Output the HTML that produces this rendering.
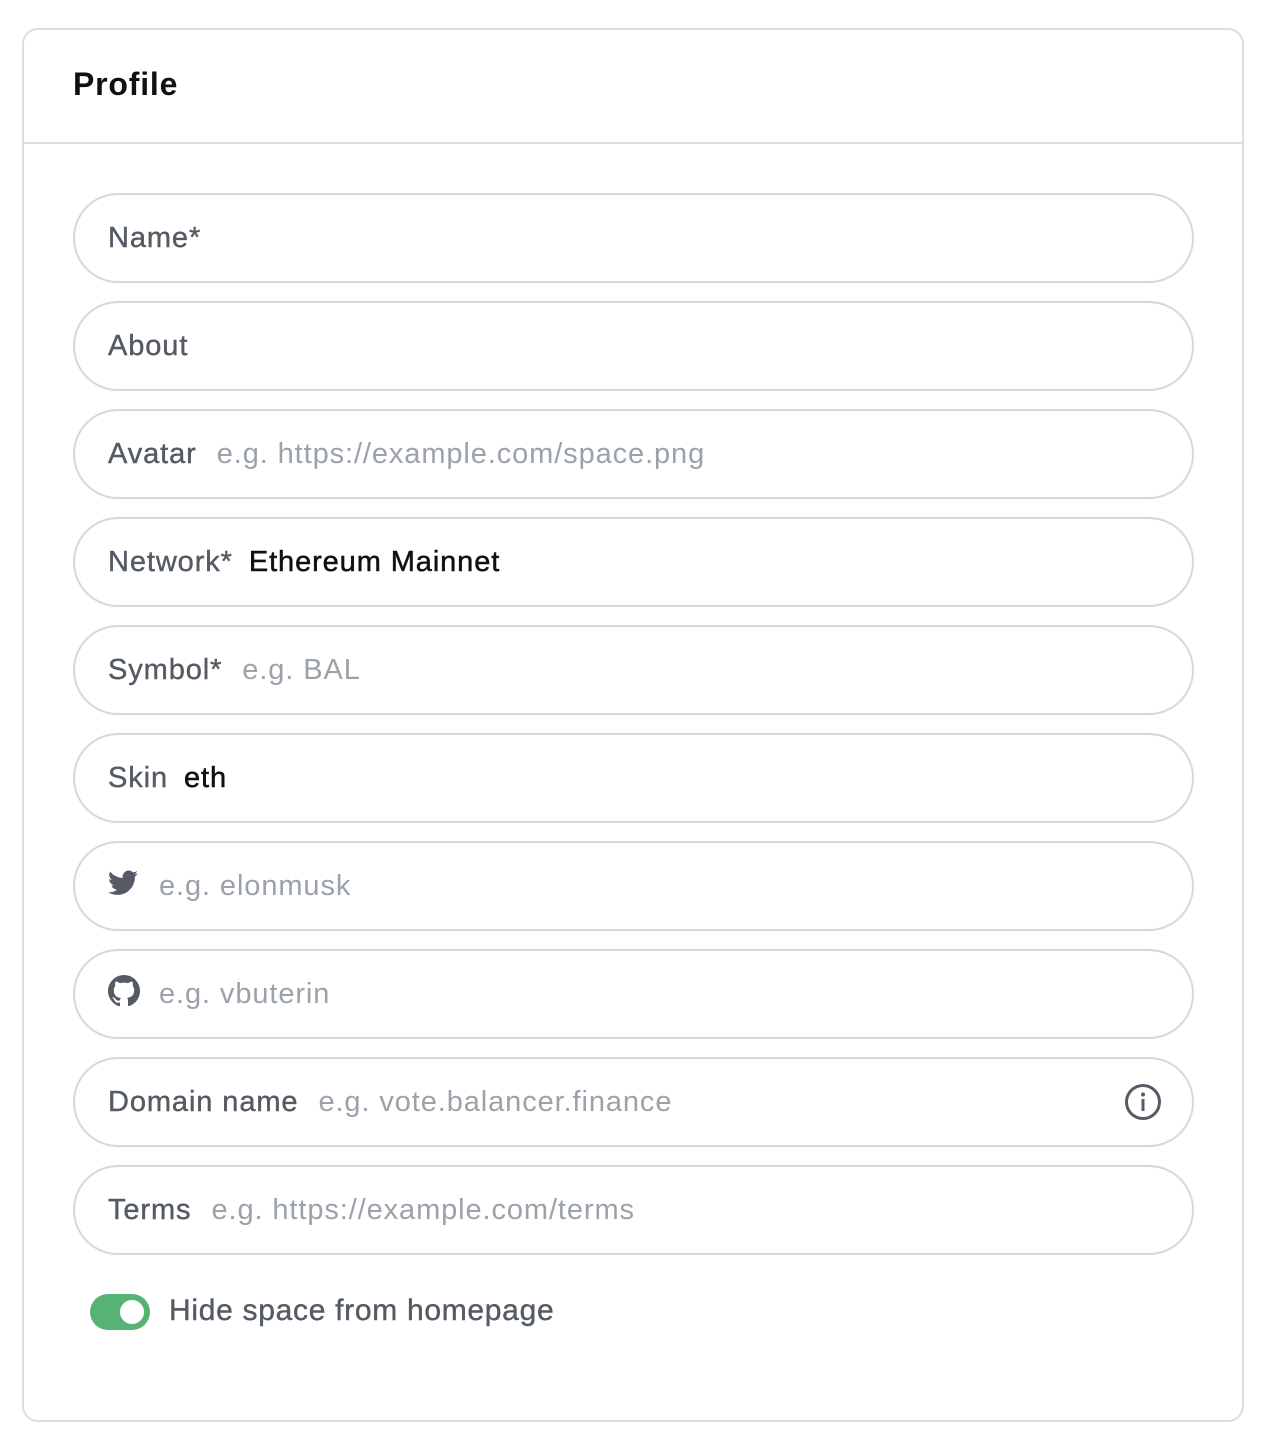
<!DOCTYPE html>
<html><head><style>
body{margin:0;background:#fff;font-family:"Liberation Sans",sans-serif;}
.card{position:absolute;left:22px;top:28px;width:1218px;height:1390px;border:2px solid #dcdde0;border-radius:16px;box-sizing:content-box;}
.hdr{height:112px;border-bottom:2px solid #dcdde0;}
.hdr h1{margin:0;position:absolute;left:49px;top:36px;font-size:32px;font-weight:bold;color:#111;letter-spacing:0.8px;}
.in{position:absolute;left:49px;width:1121px;height:90px;border:2px solid #d6d8dc;border-radius:46px;display:flex;align-items:center;padding-left:33px;box-sizing:border-box;font-size:29px;letter-spacing:0.9px;}
.l{color:#545b64;margin-right:20px;-webkit-text-stroke:0.4px #545b64;}
.p{color:#9ca2aa;}
.v{color:#111;-webkit-text-stroke:0.5px #111;}
.tg{position:absolute;left:66px;top:1264px;width:60px;height:36px;border-radius:18px;background:#57b375;}
.tg::after{content:"";position:absolute;right:6px;top:6px;width:24px;height:24px;border-radius:50%;background:#fff;}
.tt{position:absolute;left:145px;top:1264px;font-size:30px;color:#545b64;letter-spacing:0.7px;-webkit-text-stroke:0.4px #545b64;}
</style></head><body>
<div class="card">
<div class="hdr"><h1>Profile</h1></div>
<div class="in" style="top:163px"><span class="l">Name*</span></div>
<div class="in" style="top:271px"><span class="l">About</span></div>
<div class="in" style="top:379px"><span class="l">Avatar</span><span class="p">e.g. https://example.com/space.png</span></div>
<div class="in" style="top:487px"><span class="l" style="margin-right:16px">Network*</span><span class="v">Ethereum Mainnet</span></div>
<div class="in" style="top:595px"><span class="l">Symbol*</span><span class="p">e.g. BAL</span></div>
<div class="in" style="top:703px"><span class="l" style="margin-right:16px">Skin</span><span class="v">eth</span></div>
<div class="in" style="top:811px"><svg width="30" height="26" viewBox="0 0 24 20" style="margin-right:21px;margin-top:-6px"><path fill="#545b64" d="M24 2.4a9.8 9.8 0 0 1-2.8.8A4.9 4.9 0 0 0 23.3.4a9.9 9.9 0 0 1-3.1 1.2A4.9 4.9 0 0 0 11.8 6 14 14 0 0 1 1.7.9a4.9 4.9 0 0 0 1.5 6.6A4.9 4.9 0 0 1 1 6.9 4.9 4.9 0 0 0 4.9 11.8a4.9 4.9 0 0 1-2.2.1 4.9 4.9 0 0 0 4.6 3.4A9.9 9.9 0 0 1 0 17.3 14 14 0 0 0 7.5 19.5c9 0 14-7.5 14-14v-.6A10 10 0 0 0 24 2.4z"/></svg><span class="p">e.g. elonmusk</span></div>
<div class="in" style="top:919px"><svg width="32" height="32" viewBox="0 0 16 16" style="margin-right:19px;margin-top:-6px"><path fill="#545b64" d="M8 0C3.6 0 0 3.6 0 8c0 3.5 2.3 6.5 5.5 7.6.4.1.5-.2.5-.4v-1.4c-2.2.5-2.7-1-2.7-1-.4-.9-.9-1.2-.9-1.2-.7-.5.1-.5.1-.5.8.1 1.2.8 1.2.8.7 1.2 1.9.9 2.3.7.1-.5.3-.9.5-1.1-1.8-.2-3.6-.9-3.6-4 0-.9.3-1.6.8-2.1-.1-.2-.4-1 .1-2.1 0 0 .7-.2 2.2.8.6-.2 1.3-.3 2-.3s1.4.1 2 .3c1.5-1 2.2-.8 2.2-.8.4 1.1.2 1.9.1 2.1.5.6.8 1.3.8 2.1 0 3.1-1.9 3.7-3.6 3.9.3.3.5.8.5 1.5v2.2c0 .2.1.5.6.4C13.7 14.5 16 11.5 16 8c0-4.4-3.6-8-8-8z"/></svg><span class="p">e.g. vbuterin</span></div>
<div class="in" style="top:1027px"><span class="l">Domain name</span><span class="p">e.g. vote.balancer.finance</span>
<svg width="40" height="40" viewBox="0 0 40 40" style="position:absolute;right:29px;top:23px"><circle cx="20" cy="20" r="16.5" fill="none" stroke="#545b64" stroke-width="3"/><circle cx="20" cy="12.5" r="2" fill="#545b64"/><rect x="18.5" y="17" width="3" height="12" fill="#545b64"/></svg></div>
<div class="in" style="top:1135px"><span class="l">Terms</span><span class="p">e.g. https://example.com/terms</span></div>
<div class="tg"></div>
<div class="tt">Hide space from homepage</div>
</div>
</body></html>
